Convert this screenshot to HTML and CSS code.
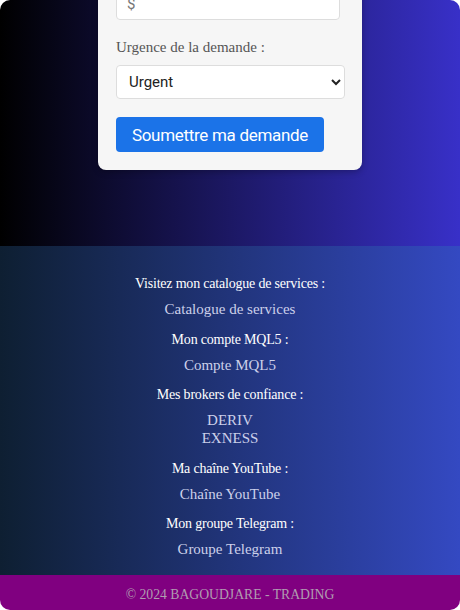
FILE: index.html
```html
<!DOCTYPE html>
<html lang="fr">
<head>
<meta charset="utf-8">
<title>Bagoudjare Trading</title>
<link rel="stylesheet" href="styles.css">
</head>
<body>
<div class="page">
  <section class="hero">
    <form class="card">
      <input class="field-input" type="text" placeholder="$" aria-label="Budget">
      <label class="field-label" for="urgence">Urgence de la demande :</label>
      <select class="field-select" id="urgence">
        <option>Urgent</option>
        <option>Normal</option>
      </select>
      <button class="submit" type="button">Soumettre ma demande</button>
    </form>
  </section>
  <footer class="links">
    <div class="group">
      <p class="heading">Visitez mon catalogue de services :</p>
      <a class="link" href="#">Catalogue de services</a>
    </div>
    <div class="group">
      <p class="heading">Mon compte MQL5 :</p>
      <a class="link" href="#">Compte MQL5</a>
    </div>
    <div class="group">
      <p class="heading">Mes brokers de confiance :</p>
      <a class="link" href="#">DERIV</a>
      <a class="link" href="#">EXNESS</a>
    </div>
    <div class="group">
      <p class="heading">Ma chaîne YouTube :</p>
      <a class="link" href="#">Chaîne YouTube</a>
    </div>
    <div class="group">
      <p class="heading">Mon groupe Telegram :</p>
      <a class="link" href="#">Groupe Telegram</a>
    </div>
  </footer>
  <div class="copyright">© 2024 BAGOUDJARE - TRADING</div>
</div>
</body>
</html>
```

FILE: styles.css
```css
html, body {
  margin: 0;
  padding: 0;
  background: #ffffff;
}

.page {
  width: 460px;
  height: 610px;
  border-radius: 10px;
  overflow: hidden;
  font-family: "Liberation Serif", "Times New Roman", serif;
}

.hero {
  height: 246px;
  display: flex;
  flex-direction: column;
  align-items: center;
  background: linear-gradient(to right, #000000, #3830c8);
}

.card {
  width: 264px;
  box-sizing: border-box;
  margin-top: -31px;
  padding: 18px;
  background: #f6f6f6;
  border-radius: 8px;
  box-shadow: 0 2px 6px rgba(0, 0, 0, 0.25);
  display: flex;
  flex-direction: column;
  align-items: flex-start;
}

.field-label {
  font-size: 15px;
  line-height: 18px;
  color: #555555;
  margin-bottom: 9px;
}

.field-input {
  width: 224px;
  height: 33px;
  box-sizing: border-box;
  margin: 0 0 18px 0;
  padding: 0 10px;
  border: 1px solid #dddddd;
  border-radius: 4px;
  background: #ffffff;
  font-family: Roboto, "Liberation Sans", Arial, sans-serif;
  font-size: 15px;
}

.field-input::placeholder {
  color: #777777;
}

.field-select {
  width: 229px;
  height: 34px;
  box-sizing: border-box;
  margin: 0 0 18px 0;
  padding: 0 8px;
  border: 1px solid #dddddd;
  border-radius: 4px;
  background: #ffffff;
  color: #222222;
  font-family: Roboto, "Liberation Sans", Arial, sans-serif;
  font-size: 15px;
}

.submit {
  height: 35px;
  width: 208px;
  padding: 0;
  border: none;
  border-radius: 4px;
  background: #1b73e8;
  color: #ffffff;
  font-family: Roboto, "Liberation Sans", Arial, sans-serif;
  font-size: 17px;
  letter-spacing: -0.3px;
}

.links {
  height: 329px;
  box-sizing: border-box;
  padding-top: 29px;
  background: linear-gradient(to right, #0e1f32, #3449c2);
  display: flex;
  flex-direction: column;
  align-items: center;
  gap: 12.5px;
}

.group {
  display: flex;
  flex-direction: column;
  align-items: center;
}

.heading {
  margin: 0 0 7px 0;
  font-size: 14px;
  line-height: 18px;
  color: #ffffff;
  letter-spacing: -0.2px;
}

.link {
  font-size: 15px;
  line-height: 18px;
  color: #ccd0ea;
  text-decoration: none;
}

.copyright {
  height: 35px;
  background: #800080;
  color: #b09cb0;
  font-size: 13.7px;
  line-height: 40px;
  text-align: center;
}
```
